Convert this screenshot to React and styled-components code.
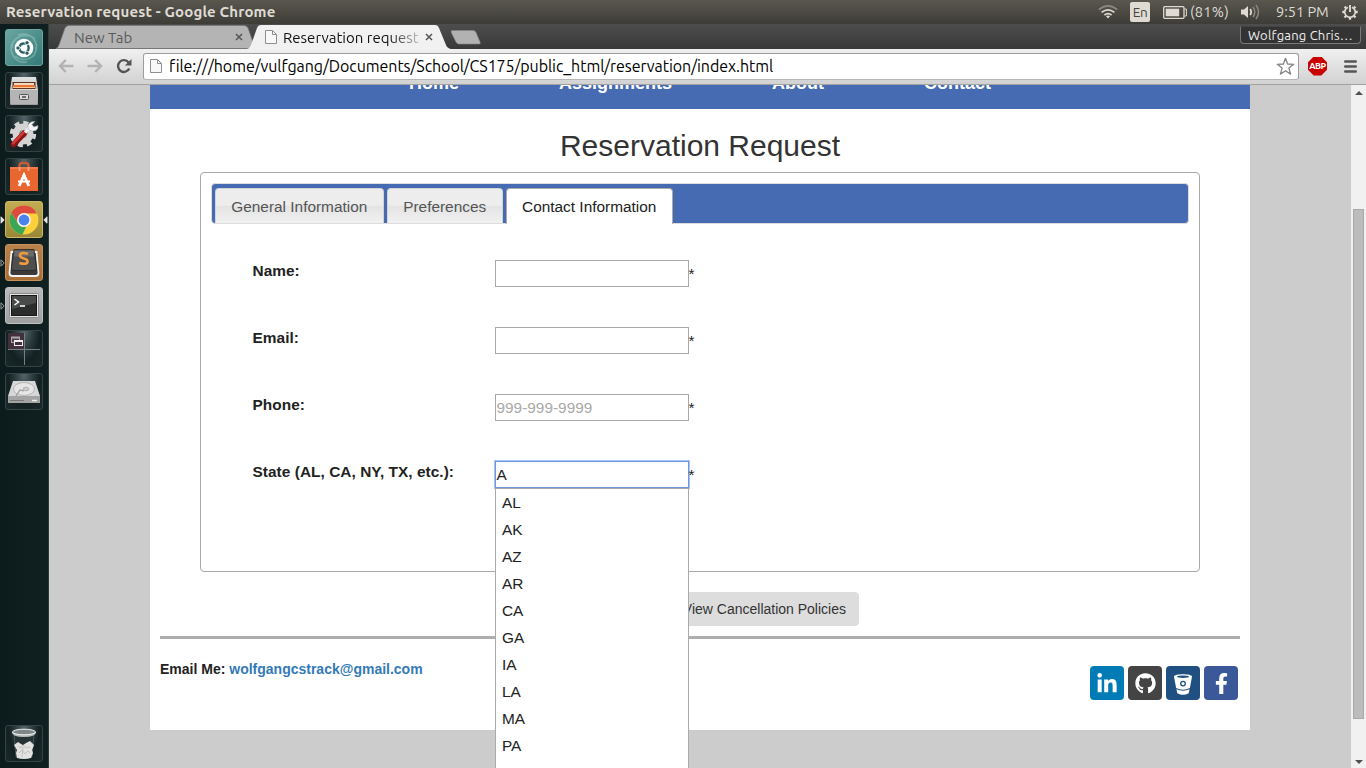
import React from 'react';
import styled, { createGlobalStyle } from 'styled-components';
import { FaLinkedinIn, FaGithub, FaFacebookF } from 'react-icons/fa';

const sans = '"Liberation Sans", Arial, sans-serif';
const ui = 'Ubuntu, "Noto Sans", sans-serif';

const Global = createGlobalStyle`
  * { box-sizing: border-box; }
  html, body { margin: 0; height: 100%; overflow: hidden; background: #ccc; }
  svg { display: block; flex: none; }
`;

const Desktop = styled.div`
  width: 1366px;
  height: 768px;
  overflow: hidden;
  display: flex;
  flex-direction: column;
  font-family: ${sans};
`;

/* ---------- system bar ---------- */
const SystemBar = styled.header`
  flex: none;
  height: 24px;
  padding: 0 8px 0 6px;
  display: flex;
  align-items: center;
  justify-content: space-between;
  background: linear-gradient(#59574e, #3d3c37);
  color: #dfdbd2;
  font-family: ${ui};
`;
const WindowTitle = styled.div`
  font-weight: 600;
  font-size: 15px;
  line-height: 24px;
  letter-spacing: 0.15px;
  white-space: pre;
`;
const Indicators = styled.div`
  display: flex;
  align-items: center;
  height: 24px;
`;
const IndicatorText = styled.span`
  width: ${p => p.$width}px;
  margin: 0 ${p => p.$after}px 0 ${p => p.$before}px;
  font-size: 14.5px;
  line-height: 24px;
  letter-spacing: ${p => p.$tracking || 0}px;
  white-space: nowrap;
`;
const Language = styled.span`
  width: 20px;
  height: 20px;
  margin: 0 13px 0 12px;
  border-radius: 2px;
  background: #dfdbd2;
  color: #45443f;
  font-size: 13.5px;
  line-height: 21px;
  text-align: center;
  letter-spacing: -0.4px;
`;

/* ---------- launcher ---------- */
const Workspace = styled.div`
  flex: 1;
  min-height: 0;
  display: flex;
`;
const Launcher = styled.aside`
  flex: none;
  width: 49px;
  padding: 5px 0 6px 5px;
  display: flex;
  flex-direction: column;
  gap: 6px;
  background: linear-gradient(90deg, #0c1b1c, #101f20);
  border-right: 1px solid #2c3c3b;
`;
const Tile = styled.div`
  position: relative;
  flex: none;
  width: 38px;
  height: 37px;
  margin-top: ${p => (p.$last ? 'auto' : 0)};
  display: grid;
  place-items: center;
  border-radius: 3px;
  border: 1px solid ${p => p.$edge || '#344243'};
  background: ${p => p.$fill || 'radial-gradient(ellipse at 50% 0, #56666a 0%, #2c3b3d 35%, #132123 62%, #1b292b 100%)'};
`;
const Pip = styled.svg`
  position: absolute;
  top: 14px;
  ${p => (p.$right ? 'right: -6px; transform: scaleX(-1);' : 'left: -6px;')}
`;

/* ---------- browser chrome ---------- */
const Browser = styled.main`
  flex: 1;
  min-width: 0;
  display: flex;
  flex-direction: column;
`;
const TabStrip = styled.div`
  flex: none;
  height: 25px;
  display: flex;
  background: linear-gradient(#4d4d4d, #393939);
  font-family: ${ui};
`;
const BrowserTab = styled.div`
  position: relative;
  z-index: ${p => (p.$active ? 2 : 1)};
  flex: none;
  width: ${p => p.$width}px;
  margin-left: ${p => p.$offset}px;
  padding: 1px ${p => p.$end}px 0 ${p => p.$pad}px;
  display: flex;
  align-items: center;
  gap: 6px;
  color: ${p => (p.$active ? '#111' : '#5a5a5a')};
  font-size: 15px;
  line-height: 23px;
  white-space: nowrap;
`;
const TabShape = styled.svg`
  position: absolute;
  inset: 0;
  z-index: -1;
`;
const TabLabel = styled.span`
  flex: 1;
  min-width: 0;
  letter-spacing: ${p => p.$tracking || 0}px;
  ${p => p.$fade && 'mask-image: linear-gradient(90deg, #000 78%, rgba(0,0,0,.2));'}
`;
const NewTabButton = styled.svg`
  margin-left: -1px;
`;
const Profile = styled.div`
  align-self: flex-start;
  margin: 2px 5px 0 auto;
  width: 121px;
  height: 18px;
  border: 1px solid #787878;
  border-top-color: #444;
  border-radius: 0 0 4px 4px;
  background: #333;
  color: #eee;
  font-size: 13px;
  line-height: 17px;
  text-align: center;
  letter-spacing: 0.2px;
  white-space: nowrap;
`;
const Toolbar = styled.div`
  flex: none;
  height: 36px;
  padding: 0 9px 1px 9px;
  display: flex;
  align-items: center;
  background: linear-gradient(#f0f0f0, #d2d2d2);
  border-bottom: 1px solid #a2a2a2;
`;
const NavButtons = styled.div`
  display: flex;
  gap: 13px;
`;
const Omnibox = styled.div`
  flex: none;
  width: 1156px;
  height: 27px;
  margin: 0 9px 0 11px;
  padding: 0 3px 0 6px;
  display: flex;
  align-items: center;
  background: #fff;
  border: 1px solid #9d9d9d;
  border-bottom-color: #b5b5b5;
  border-radius: 3px;
`;
const Url = styled.span`
  flex: 1;
  margin-left: 7px;
  color: #000;
  font-family: ${ui};
  font-size: 16px;
  line-height: 24px;
  letter-spacing: -0.06px;
`;
const AdBlock = styled.span`
  width: 19px;
  height: 19px;
  margin-right: 17px;
  clip-path: polygon(30% 0, 70% 0, 100% 30%, 100% 70%, 70% 100%, 30% 100%, 0 70%, 0 30%);
  background: #c80000;
  color: #fff;
  font: bold 9px/19px ${ui};
  letter-spacing: -0.5px;
  text-align: center;
`;

/* ---------- page ---------- */
const Viewport = styled.div`
  flex: 1;
  min-height: 0;
  display: flex;
  background: #ccc;
`;
const Scroller = styled.div`
  flex: 1;
  height: 683px;
  overflow: hidden;
`;
const Page = styled.div`
  width: 1100px;
  height: 645px;
  margin: 0 auto;
  background: #fff;
  color: #222;
`;
const Nav = styled.nav`
  height: 24px;
  overflow: hidden;
  display: flex;
  justify-content: center;
  align-items: flex-end;
  gap: 100px;
  padding-bottom: 16px;
  background: #466bb2;
`;
const NavLink = styled.a`
  color: #fff;
  font-weight: bold;
  font-size: 18px;
  line-height: 20px;
`;
const Title = styled.h2`
  margin: 20px 0 10px;
  color: #333;
  font-weight: 500;
  font-size: 30px;
  line-height: 33px;
  text-align: center;
`;
const Panel = styled.section`
  width: 1000px;
  height: 400px;
  margin: 0 auto;
  padding: 10px;
  border: 1px solid #aaa;
  border-radius: 4px;
`;
const FormTabs = styled.div`
  height: 41px;
  padding: 4px 0 0 2.9px;
  display: flex;
  gap: 3.1px;
  border: 1px solid #ddd;
  border-radius: 4px;
  background: #466bb2;
`;
const FormTab = styled.div`
  height: ${p => (p.$active ? 36 : 35)}px;
  padding: 0 15.4px;
  border: 1px solid ${p => (p.$active ? '#aaa' : '#d3d3d3')};
  border-bottom: 0;
  border-radius: 4px 4px 0 0;
  background: ${p => (p.$active ? '#fff' : 'linear-gradient(#ededed 0%, #ededed 48%, #e3e3e3 50%, #f1f1f1 100%)')};
  color: ${p => (p.$active ? '#212121' : '#555')};
  font-size: 15.4px;
  line-height: 36px;
  white-space: nowrap;
`;
const Fields = styled.div`
  padding: 36px 0 0 41.5px;
  display: grid;
  grid-auto-rows: 67px;
`;
const Field = styled.div`
  display: flex;
  align-items: flex-start;
  font-size: 15.4px;
`;
const Label = styled.label`
  width: 242.5px;
  font-weight: bold;
  line-height: 22px;
  letter-spacing: 0.05px;
`;
const InputWrap = styled.div`
  position: relative;
  display: flex;
`;
const Input = styled.div`
  width: 194px;
  height: 27px;
  padding: 0 0.5px;
  border: 1px solid ${p => (p.$focus ? '#6f97db' : '#a9a9a9')};
  box-shadow: ${p => (p.$focus ? '0 0 0 1px #a9c4f1' : 'none')};
  background: #fff;
  color: ${p => (p.$placeholder ? '#a9a9a9' : '#222')};
  line-height: 25px;
`;
const Required = styled.span`
  line-height: 28px;
  margin-left: -0.5px;
`;
const Menu = styled.div`
  position: absolute;
  z-index: 5;
  top: 27px;
  left: 0;
  width: 194px;
  height: 300px;
  padding: 0 6px;
  border: 1px solid #aaa;
  background: #fff;
`;
const Option = styled.div`
  height: 27px;
  line-height: 27px;
`;
const Actions = styled.div`
  width: 318px;
  height: 34px;
  margin: 20px auto 10px;
  display: flex;
  justify-content: flex-end;
`;
const Button = styled.button`
  padding: 6px 12px;
  border: 1px solid #ddd;
  border-radius: 4px;
  background: #ddd;
  color: #333;
  font: 14px/20px ${sans};
`;
const Footer = styled.footer`
  margin: 0 10px;
  padding: 20px 2px 0 0;
  border-top: 3px solid #aeaeae;
  display: flex;
  justify-content: space-between;
  font-weight: bold;
  font-size: 14px;
  line-height: 20px;
`;
const Mail = styled.a`
  color: #337ab7;
`;
const Socials = styled.div`
  display: flex;
  gap: 4px;
  margin-top: 7px;
`;
const Social = styled.a`
  width: 34px;
  height: 34px;
  padding-top: ${p => p.$drop || 0}px;
  display: grid;
  place-items: center;
  border-radius: 4px;
  background: ${p => p.$color};
  color: #fff;
`;
const ScrollTrack = styled.div`
  flex: none;
  width: 15px;
  padding: 6px 2px 4px;
  display: flex;
  flex-direction: column;
  align-items: center;
  background: #f1f1f1;
`;
const Thumb = styled.div`
  width: 11px;
  height: 510px;
  margin: 114px 0 auto;
  border: 1px solid #a8a8a8;
  background: #bcbcbc;
`;
const Arrow = styled.i`
  border: 4px solid transparent;
  ${p => (p.$down ? 'border-top: 4px solid #505050; border-bottom: 0;' : 'border-bottom: 4px solid #505050; border-top: 0;')}
`;

/* ---------- icons ---------- */
const DocIcon = () => (
  <svg width="12" height="16" viewBox="0 0 12 16">
    <path d="M.5 1.5h7l4 4v9H.5z" fill="#f8f8f8" stroke="#8f8f8f" />
    <path d="M7.5 1.5v4h4" fill="none" stroke="#8f8f8f" />
  </svg>
);
const CloseIcon = () => (
  <svg width="8" height="8" viewBox="0 0 8 8">
    <path d="M1 1l6 6M7 1L1 7" stroke="#555" strokeWidth="1.5" />
  </svg>
);
const BackIcon = () => (
  <svg width="16" height="16" viewBox="0 0 16 16">
    <path d="M7.8 2L2 8l5.8 6M2.5 8H15.5" fill="none" stroke="#b3b3b3" strokeWidth="2.5" />
  </svg>
);
const ForwardIcon = () => (
  <svg width="16" height="16" viewBox="0 0 16 16">
    <path d="M8.200 2L14 8l-5.800 6M13.500 8H.5" fill="none" stroke="#b3b3b3" strokeWidth="2.500" />
  </svg>
);
const ReloadIcon = () => (
  <svg width="16" height="16" viewBox="0 0 16 16">
    <path d="M12.600 4.400A5.900 5.900 0 1 0 13.300 10.500" fill="none" stroke="#555" strokeWidth="2.400" />
    <path d="M15.500 1v6.600H8.900z" fill="#555" />
  </svg>
);
const StarIcon = () => (
  <svg width="19" height="19" viewBox="0 0 19 19">
    <path d="M9.500 1.300l2.100 5.700 6.100.3-4.800 3.800 1.700 6-5.100-3.400-5.100 3.400 1.700-6L1.300 7.300 7.400 7z" fill="#fff" stroke="#858585" strokeWidth="1.300" strokeLinejoin="round" />
  </svg>
);
const MenuIcon = () => (
  <svg width="13" height="13" viewBox="0 0 13 13">
    <path d="M1.300 1.500h10.400M1.300 6.500h10.400M1.300 11.500h10.400" stroke="#555" strokeWidth="2.600" strokeLinecap="round" />
  </svg>
);
const WifiIcon = () => (
  <svg width="20" height="14" viewBox="0 0 20 14" fill="none" strokeWidth="1.700">
    <path d="M.8 4.700Q10-3.200 19.200 4.700" stroke="#89877f" />
    <path d="M3.600 7.400q6.400-5.200 12.800 0M6.400 10q3.600-2.800 7.200 0" stroke="#dfdbd2" />
    <path d="M8 11.300q2-1.400 4 0L10 13.600z" fill="#dfdbd2" />
  </svg>
);
const BatteryIcon = () => (
  <svg width="24" height="13" viewBox="0 0 24 13">
    <rect x=".7" y=".7" width="20.300" height="11.600" rx="1" fill="none" stroke="#dfdbd2" strokeWidth="1.300" />
    <path d="M21.500 3h1.900v7h-1.900" fill="none" stroke="#dfdbd2" />
    <rect x="2.700" y="2.700" width="13.500" height="7.600" fill="#dfdbd2" />
  </svg>
);
const VolumeIcon = () => (
  <svg width="20" height="16" viewBox="0 0 20 16" fill="none">
    <path d="M1 5.500h3L8 2v12L4 10.500H1z" fill="#dfdbd2" />
    <path d="M10.200 5q2 3 0 6" stroke="#dfdbd2" strokeWidth="1.700" />
    <path d="M13 3q3.600 5 0 10M16 1q5 7 0 14" stroke="#89877f" strokeWidth="1.500" />
  </svg>
);
const PowerIcon = () => (
  <svg width="16" height="16" viewBox="0 0 16 16" fill="none" stroke="#dfdbd2">
    <path d="M6 3.200a5.300 5.300 0 1 0 4 0" strokeWidth="1.700" />
    <path d="M8 1v7" strokeWidth="1.900" />
    <path d="M3.900 3.900L2.600 2.600M12.100 3.900l1.300-1.300M2.700 8H.3M13.300 8h2.400M4.200 11.800l-1.700 1.700M11.800 11.800l1.700 1.700M8 13.200v2.500" strokeWidth="2.300" />
  </svg>
);
const UbuntuIcon = () => (
  <svg width="36" height="35" viewBox="0 0 36 35">
    <g fill="none" stroke="#a5cbc7" opacity=".45">
      <path d="M6 18C6 6 20 2 29 9M30 17c1 12-13 16-21 9M12 5c13-4 22 7 17 18M21 32C8 34 2 21 7 11" strokeWidth="1.600" />
    </g>
    <circle cx="18" cy="18" r="9.300" fill="#fff" />
    <circle cx="18" cy="18" r="4.700" fill="none" stroke="#255e5c" strokeWidth="2.300" strokeDasharray="8.400 1.440" strokeDashoffset="4" />
    <g fill="#255e5c" stroke="#fff" strokeWidth=".8">
      <circle cx="12" cy="18" r="2.100" /><circle cx="21" cy="12.800" r="2.100" /><circle cx="21" cy="23.200" r="2.100" />
    </g>
  </svg>
);
const FilesIcon = () => (
  <svg width="28" height="30" viewBox="0 0 28 30">
    <defs><linearGradient id="cab" x2="0" y2="1"><stop stopColor="#e2e2e2" /><stop offset="1" stopColor="#9c9c9c" /></linearGradient></defs>
    <path d="M2 1h24l2 13v14q0 1-1 1H1q-1 0-1-1V14z" fill="url(#cab)" />
    <path d="M2.500 6h23v8h-23z" fill="#5d3520" />
    <path d="M4 7h20v2H4z" fill="#f3d9bd" /><path d="M3 9h22v2H3z" fill="#e9732f" /><path d="M3 11h22v1H3z" fill="#f7c79a" />
    <path d="M1 13h26v15H1z" fill="#b4b4b4" /><path d="M1 13h26v1H1z" fill="#dcdcdc" />
    <rect x="9.500" y="18.500" width="9" height="5" rx="1" fill="#ddd" stroke="#555" />
    <path d="M12 21h4" stroke="#444" strokeWidth="1.500" />
  </svg>
);
const SettingsIcon = () => (
  <svg width="30" height="30" viewBox="0 0 30 30">
    <circle cx="14" cy="15" r="10.500" fill="#d4d4d4" />
    <circle cx="14" cy="15" r="11.400" fill="none" stroke="#d4d4d4" strokeWidth="3.600" strokeDasharray="5 3.950" />
    <circle cx="14" cy="15" r="4" fill="#959595" />
    <path d="M4.500 25.500L15.500 14" stroke="#8d1414" strokeWidth="5.600" strokeLinecap="round" />
    <path d="M4 24.500L14.500 13.500" stroke="#d83a3a" strokeWidth="2.400" strokeLinecap="round" />
    <path d="M16 13.500l6-6" stroke="#eee" strokeWidth="3.500" />
    <path d="M26 2.500l-3 3 1.500 2.500 4.500-1.500q.5 5.500-5.500 5.500-6-1-4.500-6 2-4 7-3.500z" fill="#f4f4f4" stroke="#999" strokeWidth=".5" />
  </svg>
);
const SoftwareIcon = () => (
  <svg width="28" height="31" viewBox="0 0 28 31">
    <path d="M9.500 10V5q0-3 3-3h3q3 0 3 3v5" fill="none" stroke="#c95a31" strokeWidth="2.400" />
    <path d="M0 6h28v24H0z" fill="#e8662f" /><path d="M0 6h28v2H0z" fill="#f07c48" />
    <path d="M9.500 6v4M18.500 6v4" stroke="#f7a07b" strokeWidth="2" />
    <path d="M9.200 25L14 14l4.800 11" fill="none" stroke="#fff" strokeWidth="2.800" />
    <path d="M8 20.500h12" stroke="#fff" strokeWidth="2" />
  </svg>
);
const ChromeIcon = () => (
  <svg width="30" height="30" viewBox="0 0 30 30">
    <circle cx="15" cy="15" r="14.500" fill="#fbd03b" />
    <path d="M2.400 7.800A14.500 14.500 0 0 1 27.800 8.400H15A6.800 6.800 0 0 0 8.700 17.600z" fill="#dc4b3e" />
    <path d="M2.400 7.800L9.100 18.400A6.800 6.800 0 0 0 17.200 21.500L13.500 29.400A14.500 14.500 0 0 1 2.400 7.800z" fill="#3aa757" />
    <circle cx="15" cy="15" r="6.900" fill="#f5f5f5" /><circle cx="15" cy="15" r="5.400" fill="#4a83ec" />
  </svg>
);
const SublimeIcon = () => (
  <svg width="32" height="30" viewBox="0 0 32 30">
    <path d="M3.500 4L1.500 25q0 3 3 3h23q3 0 3-3L28.500 4z" fill="#3a3a3a" stroke="#f4f4f4" strokeWidth="1.800" />
    <path d="M6 1.500h20L28.500 20q0 2.500-2.500 2.500H6q-2.500 0-2.500-2.500z" fill="#4e4e4e" stroke="#262626" strokeWidth=".8" />
    <path d="M6.500 2.500h19l.8 6H5.700z" fill="#6a6a6a" />
    <path d="M20 5.800q-7.500-2-8 1.400 0 2.300 4 3.300 4 1 3.500 3.500-1 3-8.200 1" fill="none" stroke="#f19a3e" strokeWidth="2.600" />
  </svg>
);
const TerminalIcon = () => (
  <svg width="30" height="27" viewBox="0 0 30 27">
    <rect x=".5" y="1.500" width="29" height="24" rx="1" fill="#e6e6e6" stroke="#8a8a8a" />
    <rect x="2.500" y="3.500" width="25" height="20" fill="#2b2d2c" stroke="#161616" />
    <path d="M3 4h24v7L3 17z" fill="#484b4a" />
    <path d="M5.500 7l4 3-4 3M11 14h5" fill="none" stroke="#fff" strokeWidth="1.500" />
  </svg>
);
const SwitcherIcon = () => (
  <svg width="36" height="35" viewBox="0 0 36 35">
    <path d="M2 2h16v16H2z" fill="#43303d" />
    <path d="M18.500 2v32M2 18.500h32" stroke="#748082" />
    <rect x="5.500" y="6.500" width="8" height="5" fill="#513e4b" stroke="#aaa" /><path d="M5 6.500h9" stroke="#aaa" strokeWidth="2" />
    <rect x="8.500" y="9.500" width="8" height="5" fill="#43303d" stroke="#eee" /><path d="M8 10h9" stroke="#eee" strokeWidth="2" />
  </svg>
);
const DriveIcon = () => (
  <svg width="32" height="24" viewBox="0 0 32 24">
    <path d="M5 1h22l5 15v6q0 1-1 1H1q-1 0-1-1v-6z" fill="#d7d7d7" /><path d="M0 16h32v6q0 1-1 1H1q-1 0-1-1z" fill="#a3a3a3" />
    <ellipse cx="16" cy="9" rx="10.500" ry="6.500" fill="#e6e6e6" stroke="#aaa" strokeWidth=".8" />
    <ellipse cx="18" cy="9" rx="3" ry="1.800" fill="#ccc" stroke="#999" strokeWidth=".6" />
    <path d="M8 16l4-6 4 1" fill="none" stroke="#999" strokeWidth="1.200" /><path d="M2 20.500h14" stroke="#777" /><path d="M24 20.500h5" stroke="#eee" strokeWidth="1.500" />
  </svg>
);
const TrashIcon = () => (
  <svg width="26" height="32" viewBox="0 0 26 32">
    <path d="M3 6l2 23q8 3 16 0l2-23z" fill="#253334" stroke="#5a6667" strokeWidth=".7" />
    <path d="M3 17l4-3 3 2 2 1 3-2 4-2 4 4-2 5 1 3-2 5q-7 2-14 0l-1-5 1-3z" fill="#e2e2e0" />
    <path d="M7 18l3 2 2-3 3 3 4-1M8 25l3-3 3 4 3-3 2 2M12 19l-1 10" stroke="#bdbdbb" fill="none" strokeWidth=".9" />
    <path d="M1 4q0 5 12 5t12-5z" fill="#b9bcbc" />
    <ellipse cx="13" cy="4" rx="11.500" ry="2.800" fill="#7e8787" stroke="#f2f2f2" />
  </svg>
);
const BucketIcon = () => (
  <svg width="20" height="22" viewBox="0 0 20 22">
    <path d="M1 3.600C1 .6 19 .6 19 3.600L16.900 15q-6.900 3.500-13.800 0z" fill="#fff" />
    <path d="M3.400 16.200q6.600 2.900 13.200 0l-.9 4q-5.700 3-11.400 0z" fill="#fff" />
    <ellipse cx="10" cy="3.700" rx="6" ry="1.200" fill="#205081" />
    <circle cx="10" cy="10.600" r="2.300" fill="none" stroke="#205081" strokeWidth="1.300" />
  </svg>
);
const RunningPip = ({ right, hollow }) => (
  <Pip $right={right} width="5" height="8" viewBox="0 0 5 8">
    <path d="M1 .8L4.200 4 1 7.200z" fill={hollow ? 'none' : '#e6e6e6'} stroke={hollow ? '#a5adad' : '#e6e6e6'} strokeWidth=".9" />
  </Pip>
);

const launcherItems = [
  { icon: UbuntuIcon, fill: 'linear-gradient(135deg,#6aa5a1,#347b77)', edge: '#70a5a1' },
  { icon: FilesIcon },
  { icon: SettingsIcon },
  { icon: SoftwareIcon },
  { icon: ChromeIcon, fill: 'linear-gradient(#c3ac53,#9a8836)', edge: '#cbb967', left: true, right: true },
  { icon: SublimeIcon, fill: 'linear-gradient(#b9824c,#a86d33)', edge: '#c69259', left: true, hollow: true },
  { icon: TerminalIcon, fill: 'linear-gradient(#b9b9b9,#a0a0a0)', edge: '#c0c0c0', left: true, hollow: true },
  { icon: SwitcherIcon },
  { icon: DriveIcon },
  { icon: TrashIcon, last: true },
];
const states = ['AL', 'AK', 'AZ', 'AR', 'CA', 'GA', 'IA', 'LA', 'MA', 'PA'];
const fields = [
  { label: 'Name:' },
  { label: 'Email:' },
  { label: 'Phone:', placeholder: '999-999-9999' },
  { label: 'State (AL, CA, NY, TX, etc.):', value: 'A', options: states },
];

export default function App() {
  return (
    <Desktop>
      <Global />
      <SystemBar>
        <WindowTitle>Reservation request - Google Chrome</WindowTitle>
        <Indicators>
          <WifiIcon />
          <Language>En</Language>
          <BatteryIcon />
          <IndicatorText $width={38} $before={3} $after={12} $tracking={0.3}>(81%)</IndicatorText>
          <VolumeIcon />
          <IndicatorText $width={52} $before={16} $after={14}>9:51 PM</IndicatorText>
          <PowerIcon />
        </Indicators>
      </SystemBar>
      <Workspace>
        <Launcher>
          {launcherItems.map(({ icon: Icon, fill, edge, left, right, hollow, last }, i) => (
            <Tile key={i} $fill={fill} $edge={edge} $last={last}>
              <Icon />
              {left && <RunningPip hollow={hollow} />}
              {right && <RunningPip right />}
            </Tile>
          ))}
        </Launcher>
        <Browser>
          <TabStrip>
            <BrowserTab $width={204} $offset={4} $pad={21} $end={14}>
              <TabShape width="204" height="25" viewBox="0 0 204 25">
                <path d="M3 24.500Q5 24 6 21L12 4Q13 1.500 16 1.500H191Q194 1.500 195 4L201 21Q202 24 204 24.500z" fill="#b4b4b4" stroke="#777" strokeWidth=".7" />
              </TabShape>
              <TabLabel>New Tab</TabLabel>
              <CloseIcon />
            </BrowserTab>
            <BrowserTab $active $width={204} $offset={-10} $pad={18} $end={18}>
              <TabShape width="204" height="25" viewBox="0 0 204 25">
                <path d="M0 25Q3 24 4 21L10 4Q11 1 14 1H188Q191 1 192 4L199 21Q200 24 204 25z" fill="#f1f1f1" />
              </TabShape>
              <DocIcon />
              <TabLabel $fade>Reservation request</TabLabel>
              <CloseIcon />
            </BrowserTab>
            <NewTabButton width="32" height="25" viewBox="0 0 32 25">
              <path d="M2 6.500H23Q25 6.500 26 8.500L30 18Q31 20 29 20H9Q7 20 6 18L1.500 9Q.5 6.500 2 6.500z" fill="#b2b2b2" stroke="#888" strokeWidth=".6" />
            </NewTabButton>
            <Profile>Wolfgang Chris…</Profile>
          </TabStrip>
          <Toolbar>
            <NavButtons>
              <BackIcon />
              <ForwardIcon />
              <ReloadIcon />
            </NavButtons>
            <Omnibox>
              <DocIcon />
              <Url>file:///home/vulfgang/Documents/School/CS175/public_html/reservation/index.html</Url>
              <StarIcon />
            </Omnibox>
            <AdBlock>ABP</AdBlock>
            <MenuIcon />
          </Toolbar>
          <Viewport>
            <Scroller>
              <Page>
                <Nav>
                  {['Home', 'Assignments', 'About', 'Contact'].map(t => <NavLink key={t}>{t}</NavLink>)}
                </Nav>
                <Title>Reservation Request</Title>
                <Panel>
                  <FormTabs>
                    <FormTab>General Information</FormTab>
                    <FormTab>Preferences</FormTab>
                    <FormTab $active>Contact Information</FormTab>
                  </FormTabs>
                  <Fields>
                    {fields.map(f => (
                      <Field key={f.label}>
                        <Label>{f.label}</Label>
                        <InputWrap>
                          <Input $focus={!!f.value} $placeholder={!!f.placeholder}>{f.value || f.placeholder}</Input>
                          <Required>*</Required>
                          {f.options && <Menu>{f.options.map(o => <Option key={o}>{o}</Option>)}</Menu>}
                        </InputWrap>
                      </Field>
                    ))}
                  </Fields>
                </Panel>
                <Actions><Button>View Cancellation Policies</Button></Actions>
                <Footer>
                  <div>Email Me: <Mail>wolfgangcstrack@gmail.com</Mail></div>
                  <Socials>
                    <Social $color="#007bb6" $drop={2}><FaLinkedinIn size={22} /></Social>
                    <Social $color="#444" $drop={1}><FaGithub size={21} /></Social>
                    <Social $color="#205081" $drop={2}><BucketIcon /></Social>
                    <Social $color="#3b5998"><FaFacebookF size={21} /></Social>
                  </Socials>
                </Footer>
              </Page>
            </Scroller>
            <ScrollTrack><Arrow /><Thumb /><Arrow $down /></ScrollTrack>
          </Viewport>
        </Browser>
      </Workspace>
    </Desktop>
  );
}
